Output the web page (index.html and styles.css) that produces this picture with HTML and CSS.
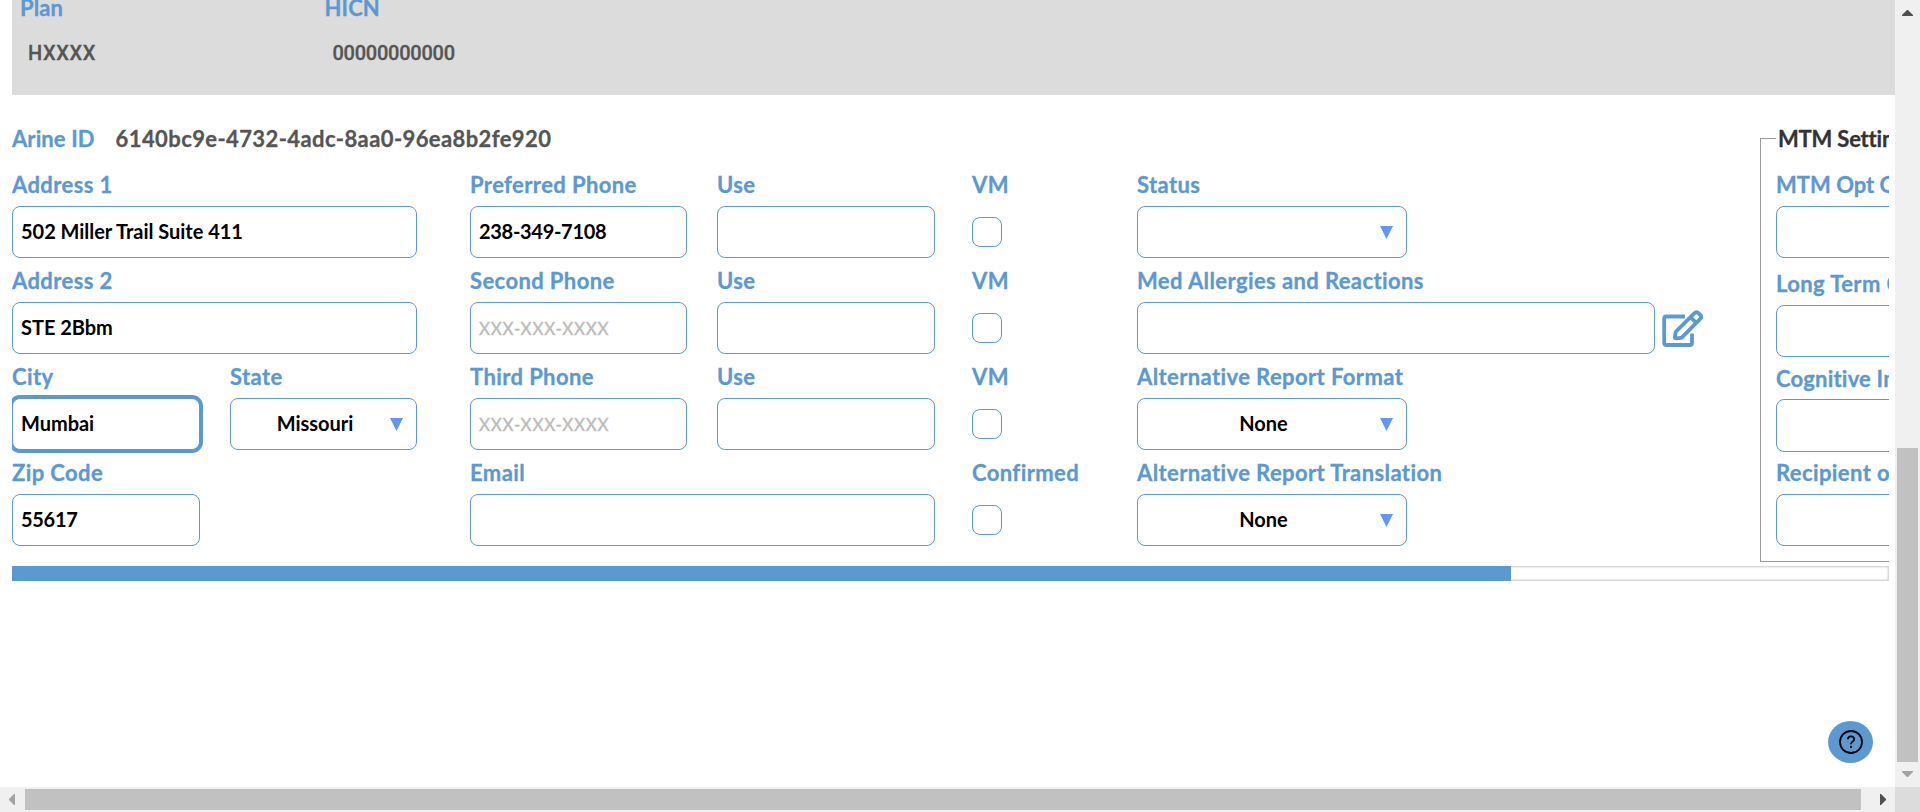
FILE: index.html
```html
<!DOCTYPE html>
<html lang="en">
<head>
<meta charset="utf-8">
<title>Patient profile</title>
<link rel="stylesheet" href="styles.css">
</head>
<body>
<div class="window">
  <main class="page">
    <section class="plan">
      <div class="plan-item"><span class="label">Plan</span><span class="plan-value">HXXXX</span></div>
      <div class="plan-item"><span class="label">HICN</span><span class="plan-value digits">00000000000</span></div>
    </section>
    <section class="scroller">
      <div class="details">
        <div class="main-col">
          <div class="arine"><span class="label">Arine ID</span><span class="arine-id">6140bc9e-4732-4adc-8aa0-96ea8b2fe920</span></div>
          <div class="columns">
            <div class="address">
              <label class="field wide"><span class="label">Address 1</span><input class="box" value="502 Miller Trail Suite 411"></label>
              <label class="field wide"><span class="label">Address 2</span><input class="box" value="STE 2Bbm"></label>
              <label class="field"><span class="label">City</span><input class="box focused" value="Mumbai"></label>
              <label class="field"><span class="label">State</span><span class="box select"><span class="choice">Missouri</span><svg class="caret" viewBox="0 0 13 13"><path d="M0 0H13L6.500 13Z"/></svg></span></label>
              <label class="field"><span class="label">Zip Code</span><input class="box numeric" value="55617"></label>
            </div>
            <div class="phones">
              <label class="field"><span class="label">Preferred Phone</span><input class="box numeric" value="238-349-7108"></label>
              <label class="field"><span class="label">Use</span><input class="box"></label>
              <label class="field"><span class="label">Second Phone</span><input class="box" placeholder="XXX-XXX-XXXX"></label>
              <label class="field"><span class="label">Use</span><input class="box"></label>
              <label class="field"><span class="label">Third Phone</span><input class="box" placeholder="XXX-XXX-XXXX"></label>
              <label class="field"><span class="label">Use</span><input class="box"></label>
              <label class="field wide"><span class="label">Email</span><input class="box"></label>
            </div>
            <div class="checks">
              <label class="field"><span class="label">VM</span><input class="check" type="checkbox"></label>
              <label class="field"><span class="label">VM</span><input class="check" type="checkbox"></label>
              <label class="field"><span class="label">VM</span><input class="check" type="checkbox"></label>
              <label class="field"><span class="label">Confirmed</span><input class="check" type="checkbox"></label>
            </div>
            <div class="reports">
              <label class="field"><span class="label">Status</span><span class="box select"><span class="choice"></span><svg class="caret" viewBox="0 0 13 13"><path d="M0 0H13L6.500 13Z"/></svg></span></label>
              <div class="field">
                <span class="label">Med Allergies and Reactions</span>
                <div class="allergies">
                  <input class="box">
                  <svg class="edit" viewBox="0 0 42 38"><path d="M23 6.500H4.500Q2.200 6.500 2.200 8.800V32.700Q2.200 35 4.500 35H27.700Q30 35 30 32.700V23.500M32.500 3.200Q34.500 1.200 36.500 3.200L38.200 4.900Q40.200 6.900 38.200 8.900L20.500 26.800Q19.500 27.800 18 28L14 28.300Q12.700 28.300 12.900 27L13.500 22.800Q13.700 21.800 14.500 21ZM14.500 21L32.500 3.200M28.500 7.200L34.300 13"/></svg>
                </div>
              </div>
              <label class="field"><span class="label">Alternative Report Format</span><span class="box select"><span class="choice">None</span><svg class="caret" viewBox="0 0 13 13"><path d="M0 0H13L6.500 13Z"/></svg></span></label>
              <label class="field"><span class="label">Alternative Report Translation</span><span class="box select"><span class="choice">None</span><svg class="caret" viewBox="0 0 13 13"><path d="M0 0H13L6.500 13Z"/></svg></span></label>
            </div>
          </div>
        </div>
        <fieldset class="mtm">
          <legend>MTM Settings</legend>
          <label class="field opt-out"><span class="label">MTM Opt Out</span><input class="box"></label>
          <label class="field care"><span class="label">Long Term Care</span><input class="box"></label>
          <label class="field cognitive"><span class="label">Cognitive Impairment</span><input class="box"></label>
          <label class="field"><span class="label">Recipient of CMR</span><input class="box"></label>
        </fieldset>
      </div>
      <div class="track"><div class="thumb"></div></div>
    </section>
    <button class="help" aria-label="Help"><svg viewBox="0 0 24 24"><circle cx="12" cy="12" r="11"/><path d="M8.800 9.300Q9 6.300 12 6.300T15.200 9.200C15.200 11.300 12 11.500 12 14.200M12 15.800V18"/></svg></button>
  </main>
  <div class="vbar">
    <svg class="arrow-v" viewBox="0 0 11 6"><path d="M0 6V5L5 0H6L11 5V6Z"/></svg>
    <div class="vthumb"></div>
    <svg class="arrow-v off" viewBox="0 0 11 6"><path d="M0 0V1L5 6H6L11 1V0Z"/></svg>
  </div>
  <div class="hbar">
    <svg class="arrow-h off" viewBox="0 0 6 11"><path d="M6 0H5L0 5V6L5 11H6Z"/></svg>
    <div class="hthumb"></div>
    <svg class="arrow-h" viewBox="0 0 6 11"><path d="M0 0H1L6 5V6L1 11H0Z"/></svg>
  </div>
  <div class="corner"></div>
</div>
</body>
</html>
```
FILE: styles.css
```css
* { box-sizing: border-box; }
body { margin: 0; background: #fff; font-family: Lato, "Open Sans", sans-serif; overflow: hidden; }
.window { display: grid; grid-template: 787px 25px / 1895px 25px; height: 812px; }
.page { position: relative; overflow: hidden; padding-left: 12px; }
.plan { display: flex; height: 95px; padding-left: 8px; background: #dcdcdc; }
.plan-item { display: flex; flex-direction: column; width: 304.500px; margin-top: -7px; }
.plan-value { margin: 16px 0 0 8px; font: 500 20px/28px Roboto, sans-serif; color: #555; letter-spacing: 0.600px; -webkit-text-stroke: 0.300px #555; }
.plan-value.digits { letter-spacing: -0.250px; }
.label { display: block; height: 30px; font-size: 22px; line-height: 30px; font-weight: 700; color: #5c99d0; white-space: nowrap; letter-spacing: 0.400px; -webkit-text-stroke: 0.300px #5c99d0; }
.plan .label, .arine .label { letter-spacing: 0.100px; }
.scroller { width: 1877px; padding-top: 29px; overflow: hidden; }
.details { display: flex; height: 438px; }
.main-col { flex: 0 0 1748px; }
.arine { display: flex; gap: 21px; height: 46px; }
.arine-id { font-size: 22px; line-height: 30px; font-weight: 700; color: #555; letter-spacing: 0.400px; -webkit-text-stroke: 0.300px #555; }
.columns { display: flex; }
.field { display: block; height: 96px; }
.field .label { height: 36px; }
.box { display: block; width: 100%; height: 52px; border: 1px solid #5c99d0; border-radius: 8px; background: #fff; padding: 0 7px 2px 8px; font: 700 20px/48px Lato, "Open Sans", sans-serif; color: #000; letter-spacing: -0.030px; outline: none; }
.box::placeholder { color: #bbb; font-weight: 400; font-size: 17px; letter-spacing: 0.750px; opacity: 1; -webkit-text-stroke: 0.400px #bbb; }
.numeric { letter-spacing: -0.300px; }
.focused { box-shadow: 0 0 0 3px #5c99d0; }
.select { display: flex; align-items: center; padding: 0 13px 0 0; }
.choice { flex: 1; text-align: center; padding: 0 0 2px 9px; }
.caret { width: 13px; height: 13px; fill: #6495ed; }
.wide { grid-column: span 2; }
.address { display: grid; grid-template-columns: 188px 187px; column-gap: 30px; width: 405px; margin-right: 53px; }
.phones { display: grid; grid-template-columns: 217px 218px; column-gap: 30px; margin-right: 37px; }
.checks { width: 165px; }
.check { display: block; appearance: none; width: 30px; height: 30px; margin: 11px 0 0; border: 1px solid #5c99d0; border-radius: 8px; }
.reports { width: 570px; }
.reports .select { width: 270px; }
.allergies { display: flex; gap: 7px; }
.allergies .box { width: 518px; }
.edit { width: 42px; height: 38px; margin-top: 8px; fill: none; stroke: #5c99d0; stroke-width: 3.800; stroke-linejoin: round; }
.mtm { flex: 0 0 400px; height: 438px; margin: 0; padding: 17px 15px 0; border: 1px solid #999; min-width: 0; }
.mtm legend { display: block; height: 29px; padding: 0 3px 0 2px; font-size: 22px; line-height: 30px; font-weight: 700; color: #333; letter-spacing: -0.200px; -webkit-text-stroke: 0.300px #333; }
.mtm .label { letter-spacing: 0.400px; }
.mtm .opt-out .label { letter-spacing: 0; }
.mtm .cognitive .label { letter-spacing: 0.200px; }
.opt-out { height: 99px; }
.care { height: 95px; }
.cognitive { height: 94px; }
.cognitive .label { height: 35px; }
.cognitive .box { height: 53px; }
.track { height: 15px; margin-top: 4px; border: 1px solid #d8d8d8; box-shadow: inset 0 0 2px #bbb; }
.thumb { width: 1499px; height: 15px; margin: -1px; background: #5c99d0; }
.help { position: absolute; left: 1828px; top: 721px; display: grid; place-items: center; width: 45px; height: 42px; padding: 0; border: 0; border-radius: 50%; background: #5c99d0; }
.help svg { width: 24px; height: 24px; fill: none; stroke: #000; stroke-width: 1.800; }
.vbar { display: flex; flex-direction: column; align-items: center; background: #f0f0f0; padding: 10px 0; }
.arrow-v { width: 11px; height: 6px; fill: #505050; }
.vthumb { width: 21px; height: 314px; margin: 432px 0 9px; background: #c1c1c1; }
.hbar { display: flex; align-items: center; background: #f0f0f0; padding: 0 9px; }
.arrow-h { width: 6px; height: 11px; fill: #505050; }
.arrow-v.off, .arrow-h.off { fill: #a3a3a3; }
.hthumb { width: 1836px; height: 21px; margin: 0 19px 0 10px; background: #c1c1c1; }
.corner { background: #dcdcdc; }
```
